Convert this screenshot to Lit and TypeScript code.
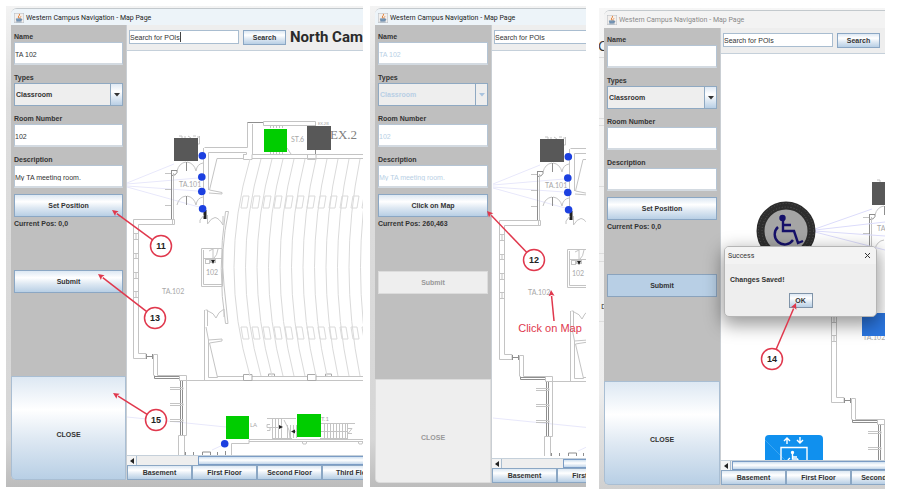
import { LitElement, html, svg, css, nothing } from "lit";
import { customElement, property } from "lit/decorators.js";

type Mode = "edit" | "pick" | "saved";

const range = (n: number) => Array.from({ length: n }, (_, i) => i);

/* West wing of the floor plan, in drawing units of one pixel. */
const westWing = svg`
  <g class="plan">
    <path class="ray" d="M127 183L174 164M127 184L198 178M127 186L198 191M127 187L199 207M127 417L226 427M212 450L225 444"/>
    <path d="M197 137h3M199.500 136v8h-2M179 136h3v2M185 136v2M188 136l3 2M193 136h3"/>
    <path d="M177 171Q179 163 186 162M187 162Q194 163 196 171Q197 164 203 163"/>
    <path d="M177 205Q179 197 186 196M187 196Q194 197 196 205Q197 198 203 197"/>
    <path class="dark" d="M186.500 162v9M203.500 162v9M186.500 196v9M203.500 196v9"/>
    <path class="dark" d="M171.500 170v50M171 170.500h6v2q-1 3-5 3"/>
    <path d="M165 173.500h6M165 189.500h6M165 205.500h6M173.500 173v46"/>
    <path d="M174.500 219.500h-41V358.500H146M174.500 219.500v5h-36V353.500H146v5M172.500 219v5"/>
    <path d="M134 233.500h4M136 234v5M134 239.500h4M134 253.500h4M136 254v5M134 258.500h4M134 272.500h4M136 273v5M134 278.500h4M134 291.500h4M136 292v5M134 297.500h4"/>
    <path class="dark" d="M146.500 354v5M152.500 354v5M147 356.500h6"/>
    <path d="M153.500 375.500V354.500h4V375.500H186.500V380.500M179.500 376v4.500H363"/>
    <path class="dark" d="M154.500 375.500V378.500H179M155 376.500h24"/>
    <path class="dark" d="M180.500 381V435M182.500 381V435"/>
    <path d="M186.500 380V435.500H178.500V455M184.500 436V455M170 387.500h13v2h-13M170 403.500h13v2h-13M170 419.500h13v2h-13"/>
    <path class="dark" d="M185.500 452v3M193.500 452v3M202.500 455v-3h8v3M217.500 452v3M225.500 451v4"/>
    <path d="M204.500 147.500H247.500V122.500M203.500 148V210M208.500 190V152.500H246.500V154.500H243.500V158.500H217L209.500 190L222 192.500V194L209 193"/>
    <rect class="solid" x="203.500" y="210" width="3" height="9"/>
    <path d="M207.500 215v9Q211 218 215 217.500Q219 218 223 225V216M204 215l-4 5v3"/>
    <path d="M225.500 211.500H228.500Q220 250 224 285L228 323.500H225.500Q217 270 225.500 211.500"/>
    <path d="M222 248.500H201.500V286.500H222.500M222.500 284.500H203.500V250M203 258.500H222M222.500 249V286M209 251l4-2v9M214 258q3-2 4-9"/>
    <rect x="205.500" y="259.500" width="4" height="4"/><rect x="210.500" y="259.500" width="5" height="3"/>
    <path class="solid" d="M211 260h4l-2 4z"/>
    <path d="M204.500 310V380M207.500 310V326M205.500 310h2M208 311Q214 313 216 318Q218 312 224 309V317"/>
    <path d="M206 327L208.500 340V377.500H217.500L209.500 343L222 341V339L208.500 340M217 376.500H363"/>
    <text x="179" y="187" font-size="7">TA.101</text>
    <text x="162" y="294" font-size="7">TA.102</text>
    <text x="206" y="275" font-size="7">102</text>
  </g>
  <rect x="174" y="138" width="24" height="23" fill="#585858"/>
  <g fill="#1c40e0">
    <circle cx="202.300" cy="155.700" r="3.800"/><circle cx="201.800" cy="177" r="3.800"/>
    <circle cx="201.800" cy="191.500" r="3.800"/><circle cx="202.600" cy="208.700" r="3.800"/>
  </g>`;

/* The part of the wing seen past the third sign: outer walls only. */
const savedWing = svg`
  <g class="plan">
    <path d="M179 136h3v2M177 171Q179 163 186 162"/>
    <path d="M177 205Q179 197 186 196"/>
    <path class="dark" d="M171.500 170v50M171 170.500h6v2q-1 3-5 3M186.500 162v9"/>
    <path d="M165 173.500h6M165 189.500h6M165 205.500h6M173.500 173v46"/>
    <path d="M174.500 219.500h-41V358.500H146M138.500 224V353.500H146v5"/>
    <path d="M134 272.500h4M136 273v5M134 278.500h4M134 291.500h4M136 292v5M134 297.500h4"/>
    <path class="dark" d="M146.500 354v5M152.500 354v5M147 356.500h6"/>
    <path d="M153.500 375.500V354.500h4V375.500H186.500V380.500M179.500 376v4.500H190"/>
    <path class="dark" d="M154.500 375.500V378.500H179M155 376.500h24M180.500 381V435M182.500 381V435"/>
    <path d="M186.500 380V435.500H178.500V455M170 387.500h13v2h-13M170 403.500h13v2h-13M170 419.500h13v2h-13"/>
    <text x="179" y="187" font-size="7">TA.101</text>
    <text x="165" y="296" font-size="7">TA.102</text>
  </g>
  <rect x="174" y="138" width="24" height="23" fill="#585858"/>`;

/* Theatre seating, stairs and their markers. */
const theatre = svg`
  <g class="plan">
    <path class="dark" d="M247.500 122.500H264M315.500 122v5M315.500 149v5"/>
    <path d="M263.500 121.500H315.500V125.500H263.500ZM252.500 124V154M252 154.500H363M252 158.500H363M243.500 154V159.500H252V154.500M307.500 154V159.500H316V154.500M287 148l4 6"/>
    <path d="M270.500 125v3M273.500 125v3M276.500 125v3M279.500 125v3M282.500 125v3M270.500 152v3M273.500 152v3M276.500 152v3M279.500 152v3M282.500 152v3"/>
    <path class="box" d="M243.500 374.500h8.500v6h-8.500zM307.500 374.500h8.500v6h-8.500zM268.500 376v-2h6v2M325.500 376v-2h6v2"/>
    ${range(13).map((i) => {
      const x = 250 + 11 * i;
      const bend = 32 - i;
      return svg`
        <path class="row" d="M${x} 159Q${x - bend} 267 ${x} 376"/>
        <path class="row" d="M${x - 7} 196h6l-2 12h-6zM${x - 9} 327h6l2 12h-6z"/>`;
    })}
    <path d="M249 439.500H363M231.500 455V443.500H249V440M249 441.500H363M302 441l1 3h3l1-3M358 441l1 3h3l1-3M267 418.500h29M320 423.500h35M272.500 419v19M272 438.500h20M320 438.500h28"/>
    <path d="M275.500 419v19M278.500 419v19M281.500 419v19M284 420l5 10 1 8M287.500 425v13M290.500 425v13M293.500 425v13M296.500 425v13M270 427.500h12M292 431.500h55"/>
    <path d="M324.500 424v14M327.500 424v14M330.500 424v14M333.500 424v14M336.500 424v14M339.500 424v14M342.500 424v14M345.500 424v14M347.500 424v14"/>
    <path d="M270 424.500h-3v3h3v3h-3M348 428.500h4l-4 5h4"/>
    <path class="solid" d="M283 427l-4-2v4zM291 431.500l4-2v4z"/>
    <text x="291" y="142" font-size="7">ST.6</text>
    <text x="318" y="125" font-size="4">EX.2B</text>
    <text class="serif" x="330" y="139" font-size="13">EX.2</text>
    <text x="250" y="427" font-size="6">LA</text>
    <text x="321" y="421" font-size="6">T.1</text>
  </g>
  <rect x="307" y="126" width="24" height="24" fill="#585858"/>
  <g fill="#00cd00">
    <rect x="264" y="129" width="23" height="23"/>
    <rect x="226" y="416" width="23" height="23"/>
    <rect x="297" y="414" width="24" height="23"/>
  </g>
  <circle cx="224.700" cy="443.800" r="3.800" fill="#1c40e0"/>`;

const savedMarkers = svg`
  <path d="M94 175L151 155M94 176L164 168M94 177L164 182M94 178L164 196" stroke="#dcdcfb" fill="none"/>
  <circle cx="65" cy="177" r="26" fill="#a5a5a5"/>
  <circle cx="65" cy="177" r="25.500" fill="none" stroke="#2d2d2d" stroke-width="8"/>
  <circle cx="65" cy="177" r="27.500" fill="none" stroke="#555" stroke-width="1" stroke-dasharray="1 2"/>
  <circle cx="65" cy="177" r="24" fill="none" stroke="#555" stroke-width="1" stroke-dasharray="1 2"/>
  <g fill="none" stroke="#15106a" stroke-width="2.400">
    <circle cx="61.500" cy="164" r="2" fill="#15106a"/>
    <path d="M62 166v11h11l4 12 5-2M62 171h8M57 173a10 10 0 1 0 15 13"/>
  </g>
  <rect x="141" y="259" width="40" height="23" fill="#2b76e0"/>
  <rect x="44" y="381" width="58" height="44" rx="4" fill="#1090ee"/>
  <path d="M44 386L66 408" stroke="#3aa5f2" fill="none"/>
  <g fill="none" stroke="#fff" stroke-width="1.400">
    <path d="M66 390v-6M63 387l3-3 3 3M79 383v6M76 386l3 3 3-3"/>
    <path d="M60 415V393.500H86V415"/>
    <circle cx="71.500" cy="398.500" r="1" fill="#fff"/>
    <path d="M71.500 400v5h5l2 4M72 403h4M69 404q-3 2-2 5"/>
  </g>`;

@customElement("java-icon")
export class JavaIcon extends LitElement {
  static styles = css`
    :host { display: block; flex: none; }
    svg { display: block; }
  `;
  render() {
    return html`<svg width="10" height="10" viewBox="0 0 18 18" aria-hidden="true">
      <rect x=".5" y=".5" width="17" height="17" fill="#f3efec" stroke="#b9bec4"/>
      <path d="M9 10Q6 7 9 5Q11 4 9.500 1.500M11 10Q10 8 12.500 6" fill="none" stroke="#e2792a" stroke-width="1.600"/>
      <path d="M4 10.500h9l-1 4H5zM13 11q3 0 0 3M3 16h11" fill="#7d9cba" stroke="#557a9e"/>
    </svg>`;
  }
}

@customElement("poi-form")
export class PoiForm extends LitElement {
  @property() mode: Mode = "edit";
  @property() position = "0,0";

  static styles = css`
    :host { display: flex; flex-direction: column; box-sizing: border-box; background: #bfbfbf; border-right: 1px solid #c9ced3; }
    * { box-sizing: border-box; }
    .fields { display: flex; flex-direction: column; gap: 7px; padding: 6px 3px 0 3px; }
    .field { display: flex; flex-direction: column; }
    label, output, input, select, button { font: bold 7px/11px "Liberation Sans", Arial, sans-serif; color: #333; }
    output { display: block; padding: 1px 2px 0 3px; white-space: nowrap; }
    input, select { width: 100%; height: 23px; margin: 0; border-radius: 0; opacity: 1; }
    input { font-weight: normal; padding: 2px 0 0; background: #fff; border: 1px solid #b4c4d4; border-bottom-width: 2px; border-bottom-color: #d3dae1; }
    .combo { position: relative; }
    select { display: block; appearance: none; padding: 0 1px; background: #eee; border: 1px solid #8fa9c2; }
    .combo::after { content: ""; position: absolute; inset: 1px 1px 1px auto; width: 11px; border-left: 1px solid #8fa9c2; background: linear-gradient(#dfe9f4, #fff 35%, #b9cfe5); pointer-events: none; }
    .combo svg { position: absolute; right: 3px; top: 10px; z-index: 1; pointer-events: none; }
    button { display: block; width: 100%; padding: 0; border-radius: 0; border: 1px solid #8ba7c4; background: linear-gradient(#dde8f3, #fff 32%, #dfe9f3 60%, #b8cfe5); text-align: center; }
    .action { height: 23px; }
    .slot { padding: 0 3px; }
    .set { margin-top: 6px; }
    .gap { flex: 1; }
    .gap.large { flex: 2; }
    .close { height: 104px; border-color: #a9bed3; padding-top: 12px; border-bottom-left-radius: 4px; }
    .pressed { background: #b8cfe5; border-color: #8aa3bd; }
    input:disabled, select:disabled { color: #b8cfe5; }
    button:disabled { background: #eee; border-color: #dcdcdc; color: #999; }
    .arrow { fill: #333; }
    .pick .arrow { fill: #a9c3de; }
    .pick .combo::after { background: #eee; }
    .body { display: contents; }
  `;

  private textField(id: string, label: string, value: string) {
    const off = this.mode === "pick";
    return html`<div class="field">
      <label for=${id}>${label}</label>
      <input id=${id} .value=${this.mode === "saved" ? "" : value} ?disabled=${off} />
    </div>`;
  }

  render() {
    const off = this.mode === "pick";
    return html`<div class="body ${this.mode}">
      <div class="fields">
        ${this.textField("name", "Name", "TA 102")}
        <div class="field">
          <label for="type">Types</label>
          <div class="combo">
            <select id="type" ?disabled=${off}><option>Classroom</option></select>
            <svg width="6" height="4" aria-hidden="true"><path class="arrow" d="M0 0h6L3 3.500z"/></svg>
          </div>
        </div>
        ${this.textField("room", "Room Number", "102")}
        ${this.textField("description", "Description", "My TA meeting room.")}
      </div>
      <div class="slot set"><button class="action">${off ? "Click on Map" : "Set Position"}</button></div>
      <output>Current Pos: ${this.position}</output>
      <div class="gap"></div>
      <div class="slot"><button class="action ${this.mode === "saved" ? "pressed" : ""}" ?disabled=${off}>Submit</button></div>
      <div class="gap large"></div>
      <button class="close" ?disabled=${off}>CLOSE</button>
    </div>`;
  }
}

@customElement("map-window")
export class MapWindow extends LitElement {
  @property() mode: Mode = "edit";
  @property() position = "0,0";

  static styles = css`
    :host { display: block; min-width: 0; }
    * { box-sizing: border-box; }
    .window { height: 100%; display: flex; flex-direction: column; overflow: hidden; border-radius: 6px 0 0 5px; border-top: 1px solid #c3c9cd; background: #eee; }
    .title { flex: none; height: 16px; display: flex; align-items: center; gap: 2px; padding: 1px 0 0 3px; background: #edf4f9; color: #222; font: 7px/10px Roboto, "Noto Sans", sans-serif; white-space: nowrap; }
    .saved .title { background: #f3f3f3; color: #8a8a8a; height: 17px; }
    .body { flex: 1; min-height: 0; display: flex; }
    poi-form { flex: none; width: 117px; }
    .edit poi-form { width: 116px; }
    .main { flex: 1; min-width: 0; display: flex; flex-direction: column; }
    .toolbar { flex: none; height: 26px; display: flex; align-items: center; gap: 4px; padding: 0 0 1px 2px; border-bottom: 1px solid #c5d0da; overflow: hidden; white-space: nowrap; }
    .search { position: relative; flex: none; width: 110px; }
    input { display: block; width: 100%; height: 14px; padding: 1px 0 0; border: 1px solid #a9bdd0; border-radius: 0; background: #fff; color: #333; font: 7px/11px "Liberation Sans", Arial, sans-serif; }
    .caret { position: absolute; left: 51px; top: 2px; width: 1px; height: 10px; background: #444; }
    button { flex: none; margin: 0; padding: 0; border-radius: 0; border: 1px solid #8ba7c4; color: #333; background: linear-gradient(#dde8f3, #fff 32%, #dfe9f3 60%, #b8cfe5); font: bold 7px/11px "Liberation Sans", Arial, sans-serif; }
    .find { width: 43px; height: 15px; }
    h1 { margin: 0; font: bold 15px/20px Roboto, "Noto Sans", sans-serif; color: #2a2a2a; }
    .map { flex: 1; min-height: 0; overflow: hidden; background: #fff; }
    .map svg { display: block; width: 100%; height: 100%; }
    .plan { fill: none; stroke: #c4c4c4; stroke-width: 1; }
    .plan .dark { stroke: #8e8e8e; }
    .plan .row { stroke: #dadada; }
    .plan .ray { stroke: #e8e8fb; }
    .plan .box { fill: #fff; stroke: #aaa; }
    .plan .solid { fill: #222; stroke: none; }
    .plan text { fill: #a8a8a8; stroke: none; font-family: Lato, "Liberation Sans", sans-serif; }
    .plan .serif { fill: #808080; font-family: "Liberation Serif", serif; }
    .scroll { flex: none; height: 10px; display: flex; background: #eee; border-top: 1px solid #c5d0da; }
    .scroll .left { width: 10px; border: 0; border-right: 1px solid #a9bdd0; background: #f4f4f4; display: grid; place-items: center; }
    .track { flex: none; width: 61px; }
    .saved .track { width: 1px; }
    .thumb { flex: 1; border: 1px solid #7b9cc5; border-right: 0; background: linear-gradient(#cfe0f0, #fff 45%, #c2d6ea); }
    .floors { flex: none; height: 15px; display: flex; overflow: hidden; }
    .floors button { width: 65px; height: 15px; white-space: nowrap; }
  `;

  private plan() {
    if (this.mode === "saved") {
      return html`<svg role="img" aria-label="Floor plan"><g transform="translate(-23 -10)">${savedWing}</g>${savedMarkers}</svg>`;
    }
    const shift = this.mode === "edit" ? "translate(-127 -51)" : "translate(-126 -50)";
    return html`<svg role="img" aria-label="Floor plan">
      <g transform=${shift}>${westWing}${this.mode === "edit" ? theatre : nothing}</g>
    </svg>`;
  }

  render() {
    const shown = { edit: 4, pick: 2, saved: 3 }[this.mode];
    const floors = ["Basement", "First Floor", "Second Floor", "Third Floor"].slice(0, shown);
    return html`<div class="window ${this.mode}">
      <div class="title"><java-icon></java-icon><span>Western Campus Navigation - Map Page</span></div>
      <div class="body">
        <poi-form .mode=${this.mode} .position=${this.position}></poi-form>
        <div class="main">
          <div class="toolbar">
            <div class="search">
              <input aria-label="Search" .value=${"Search for POIs"} />
              ${this.mode === "edit" ? html`<span class="caret"></span>` : nothing}
            </div>
            ${this.mode === "pick" ? nothing : html`<button class="find">Search</button>`}
            ${this.mode === "edit" ? html`<h1>North Cam</h1>` : nothing}
          </div>
          <div class="map">${this.plan()}</div>
          <div class="scroll">
            <button class="left" aria-label="Scroll left"><svg width="4" height="6"><path d="M4 0v6L0 3z" fill="#222"/></svg></button>
            <span class="track"></span><span class="thumb"></span>
          </div>
          <div class="floors">${floors.map((f) => html`<button>${f}</button>`)}</div>
        </div>
      </div>
    </div>`;
  }
}

interface Callout { n: string; x: number; y: number; tx: number; ty: number; }

@customElement("app-root")
export class AppRoot extends LitElement {
  static styles = css`
    :host { display: block; background: #fff; }
    * { box-sizing: border-box; }
    .page { min-height: 100vh; display: grid; grid-template-columns: 357fr 223fr 299fr; padding: 6px 15px 6px 6px; }
    .shot { position: relative; overflow: hidden; padding: 2px 0 4px 5px; margin: 0 0 2px; background: linear-gradient(#f3f3f3, #dedede 20%, #d6d6d6 90%, #bcbcbc); }
    .shot.edit { padding-bottom: 7px; }
    .shot.pick { margin-left: 7px; }
    .shot.saved { margin: 2px 0 0 13px; background: linear-gradient(#f6f6f6, #ededed 80%, #d0d0d0); }
    map-window { position: relative; height: 100%; }
    .notes, .behind { position: absolute; inset: 0; width: 100%; height: 100%; pointer-events: none; }
    .notes { fill: none; stroke: #e0384d; stroke-width: 1.500; }
    .notes circle { fill: #fff; }
    .notes .tip { fill: #e0384d; stroke: none; }
    .notes text { fill: #222; stroke: none; text-anchor: middle; font: bold 9px "Liberation Sans", Arial, sans-serif; }
    .notes .hint { fill: #e0384d; font-weight: normal; font-size: 11px; }
    .behind { stroke: #ddd; font: 14px "Open Sans", sans-serif; }
    .behind text { stroke: none; fill: #333; }
    dialog { position: absolute; inset: 238px 8px auto auto; margin: 0; width: 153px; padding: 0; border: 1px solid #b5b5b5; border-radius: 5px; background: #eee; box-shadow: 0 6px 18px 2px rgba(0, 0, 0, 0.4); overflow: hidden; color: #333; font: bold 7px/11px "Liberation Sans", Arial, sans-serif; }
    .bar { display: flex; justify-content: space-between; align-items: center; height: 17px; padding: 0 5px 0 3px; background: #f3f3f3; font: 7px/10px Roboto, sans-serif; }
    .x { padding: 0; border: 0; background: none; display: block; }
    .x svg { display: block; }
    .message { margin: 0; padding: 10px 5px 8px; }
    .ok { display: block; width: 24px; height: 15px; margin: 0 auto 8px; padding: 1px; border: 1px solid #7f93a8; border-radius: 0; color: #333; background: linear-gradient(#dde8f3, #fff 32%, #dfe9f3 60%, #b8cfe5); font: inherit; }
  `;

  private callout({ n, x, y, tx, ty }: Callout) {
    const d = Math.hypot(tx - x, ty - y);
    const ux = (tx - x) / d;
    const uy = (ty - y) / d;
    const bx = tx - ux * 6;
    const by = ty - uy * 6;
    return svg`
      <path d="M${x + ux * 10} ${y + uy * 10}L${bx} ${by}"/>
      <path class="tip" d="M${tx} ${ty}L${bx - uy * 3} ${by + ux * 3}L${bx + ux} ${by + uy}L${bx + uy * 3} ${by - ux * 3}Z"/>
      ${n ? svg`<circle cx=${x} cy=${y} r="10.500"/><text x=${x} y=${y + 3}>${n}</text>` : nothing}`;
  }

  render() {
    return html`<main class="page">
      <section class="shot edit">
        <map-window mode="edit"></map-window>
        <svg class="notes">
          ${this.callout({ n: "11", x: 155, y: 240, tx: 106, ty: 204 })}
          ${this.callout({ n: "13", x: 149, y: 312, tx: 92, ty: 268 })}
          ${this.callout({ n: "15", x: 150, y: 414, tx: 107, ty: 387 })}
        </svg>
      </section>
      <section class="shot pick">
        <map-window mode="pick" position="260,463"></map-window>
        <svg class="notes">
          ${this.callout({ n: "12", x: 164, y: 254, tx: 117, ty: 205 })}
          ${this.callout({ n: "", x: 185, y: 325, tx: 181, ty: 284 })}
          <text class="hint" x="180" y="326">Click on Map</text>
        </svg>
      </section>
      <section class="shot saved">
        <svg class="behind" aria-hidden="true">
          <path d="M0 49.500h6M0 110.500h6M0 117.500h6M0 178.500h6M0 245.500h6M0 253.500h6M0 313.500h6"/>
          <text x="-1" y="43">C</text>
          <text x="2" y="301" font-size="8">D</text>
        </svg>
        <map-window mode="saved"></map-window>
        <dialog open aria-label="Success">
          <div class="bar"><span>Success</span>
            <button class="x" aria-label="Close"><svg width="7" height="7"><path d="M1 1l5 5M6 1L1 6" stroke="#333" fill="none"/></svg></button>
          </div>
          <p class="message">Changes Saved!</p>
          <button class="ok">OK</button>
        </dialog>
        <svg class="notes">${this.callout({ n: "14", x: 173, y: 351, tx: 197, ty: 295 })}</svg>
      </section>
    </main>`;
  }
}
